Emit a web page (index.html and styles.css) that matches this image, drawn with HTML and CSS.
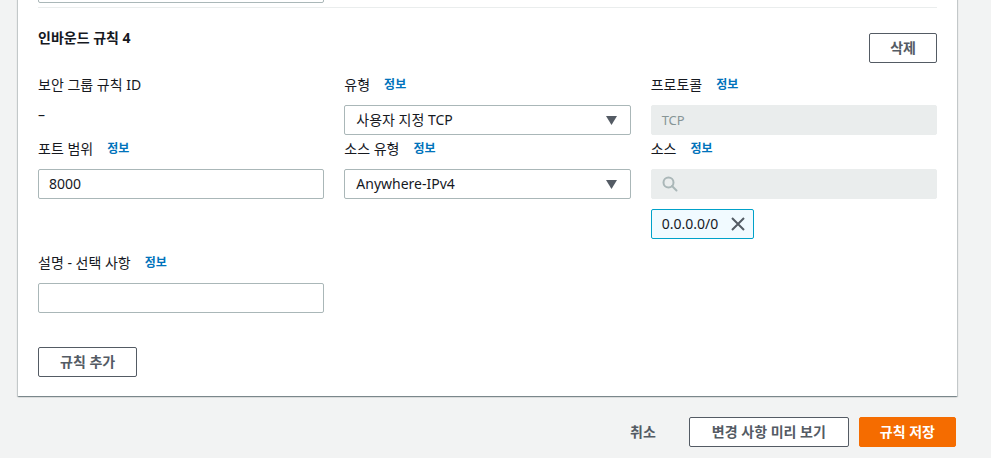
FILE: index.html
```html
<!DOCTYPE html>
<html lang="ko">
<head>
<meta charset="utf-8">
<title>인바운드 규칙 편집</title>
<link rel="stylesheet" href="styles.css">
</head>
<body>
<div class="page">
  <div class="card">
    <div class="prev-field"><div class="input"></div></div>
    <div class="divider"></div>
    <div class="rule-head">
      <h2 class="rule-title">인바운드 규칙 4</h2>
      <button class="btn btn-delete">삭제</button>
    </div>
    <div class="grid">
      <div class="field">
        <div class="label">보안 그룹 규칙 ID</div>
        <div class="value">–</div>
      </div>
      <div class="field">
        <div class="label">유형<a class="info">정보</a></div>
        <div class="input select"><span>사용자 지정 TCP</span><svg class="caret" width="11" height="9" viewBox="0 0 11 9"><polygon points="0,0 11,0 5.5,9" fill="#545b64"/></svg></div>
      </div>
      <div class="field">
        <div class="label">프로토콜<a class="info">정보</a></div>
        <div class="input disabled">TCP</div>
      </div>
      <div class="field">
        <div class="label">포트 범위<a class="info">정보</a></div>
        <div class="input">8000</div>
      </div>
      <div class="field">
        <div class="label">소스 유형<a class="info">정보</a></div>
        <div class="input select"><span>Anywhere-IPv4</span><svg class="caret" width="11" height="9" viewBox="0 0 11 9"><polygon points="0,0 11,0 5.5,9" fill="#545b64"/></svg></div>
      </div>
      <div class="field">
        <div class="label">소스<a class="info">정보</a></div>
        <div class="input search"><svg width="16" height="16" viewBox="0 0 16 16"><circle cx="6.5" cy="6.5" r="5" fill="none" stroke="#aab7b8" stroke-width="2"/><line x1="10" y1="10" x2="14.5" y2="14.5" stroke="#aab7b8" stroke-width="2" stroke-linecap="round"/></svg></div>
        <div class="tokens">
          <div class="token"><span>0.0.0.0/0</span><svg width="14" height="14" viewBox="0 0 14 14"><path d="M1 1 L13 13 M13 1 L1 13" stroke="#545b64" stroke-width="2" fill="none"/></svg></div>
        </div>
      </div>
    </div>
    <div class="field desc">
      <div class="label">설명 - 선택 사항<a class="info">정보</a></div>
      <div class="input"></div>
    </div>
    <button class="btn btn-add">규칙 추가</button>
  </div>
  <div class="footer">
    <button class="btn btn-link">취소</button>
    <button class="btn btn-preview">변경 사항 미리 보기</button>
    <button class="btn btn-primary">규칙 저장</button>
  </div>
</div>
</body>
</html>
```

FILE: styles.css
```css
html, body {
  margin: 0;
  padding: 0;
  background: #f2f3f3;
  overflow: hidden;
}
body {
  font-family: "Noto Sans", "Noto Sans CJK KR", sans-serif;
  font-size: 14px;
  line-height: 22px;
  color: #16191f;
}
.page {
  margin-top: -27px;
  padding: 0 34px 0 18px;
}
.card {
  background: #fff;
  padding: 0 20px 19px;
  box-shadow: 0 1px 1px 0 rgba(0, 28, 36, 0.3), 1px 1px 1px 0 rgba(0, 28, 36, 0.15), -1px 1px 1px 0 rgba(0, 28, 36, 0.15);
}
.prev-field {
  width: calc((100% - 40px) / 3);
}
.divider {
  margin-top: 4px;
  height: 1px;
  background: #eaeded;
}
.rule-head {
  margin-top: 19px;
  display: flex;
  justify-content: space-between;
  align-items: flex-start;
}
.rule-title {
  margin: 0;
  font-size: 14px;
  line-height: 22px;
  font-weight: 700;
}
.btn-delete {
  margin-top: 6px;
}
.grid {
  margin-top: 11px;
  display: grid;
  grid-template-columns: repeat(3, 1fr);
  column-gap: 20px;
  row-gap: 3px;
}
.label {
  line-height: 22px;
  margin-bottom: 9px;
  display: flex;
  align-items: center;
}
.info {
  margin-left: 14px;
  font-size: 12px;
  font-weight: 700;
  color: #0073bb;
}
.value {
  line-height: 22px;
  margin-top: -1px;
}
.input {
  box-sizing: border-box;
  height: 30px;
  border: 1px solid #aab7b8;
  border-radius: 2px;
  padding: 3px 10px;
  line-height: 22px;
  display: flex;
  align-items: center;
  background: #fff;
}
.select {
  justify-content: space-between;
  padding-left: 11px;
  padding-right: 13px;
}
.caret {
  display: block;
}
.disabled {
  background: #eaeded;
  border-color: #eaeded;
  color: #879596;
  font-size: 13px;
}
.search {
  background: #eaeded;
  border-color: #eaeded;
}
.search svg {
  display: block;
}
.tokens {
  margin-top: 10px;
  display: flex;
}
.token {
  box-sizing: border-box;
  height: 30px;
  display: flex;
  align-items: center;
  gap: 13px;
  padding: 0 8px 0 10px;
  background: #f1faff;
  border: 1px solid #00a1c9;
  border-radius: 2px;
}
.token svg {
  display: block;
}
.desc {
  margin-top: 13px;
  width: calc((100% - 40px) / 3);
}
.btn {
  box-sizing: border-box;
  height: 30px;
  padding: 3px 20px;
  border: 1px solid #545b64;
  border-radius: 2px;
  background: #fff;
  color: #545b64;
  font-family: inherit;
  font-size: 14px;
  font-weight: 700;
  line-height: 22px;
}
.btn-add {
  margin-top: 34px;
  display: block;
  padding: 3px 21px;
}
.footer {
  margin-top: 21px;
  display: flex;
  justify-content: flex-end;
  gap: 10px;
}
.btn-preview {
  padding: 3px 22px;
}
.btn-link {
  border-color: transparent;
  background: transparent;
  margin-right: 2px;
}
.btn-primary {
  background: #f56c00;
  border-color: #f56c00;
  color: #fff;
  margin-right: 1px;
}
```
